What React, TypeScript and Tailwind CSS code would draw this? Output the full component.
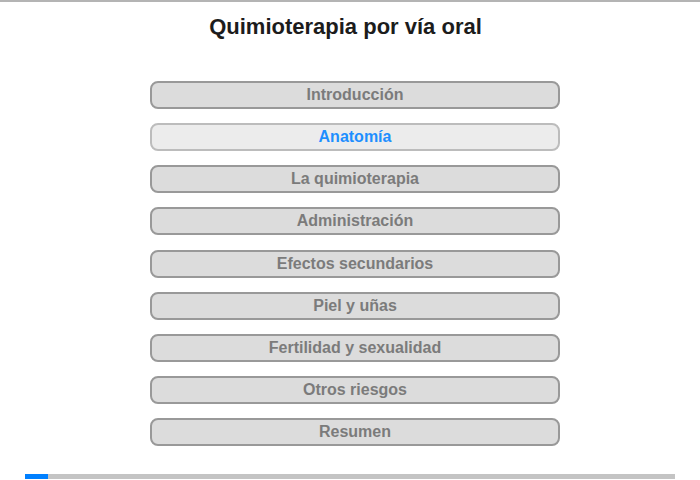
const chapters = [
  "Introducción",
  "Anatomía",
  "La quimioterapia",
  "Administración",
  "Efectos secundarios",
  "Piel y uñas",
  "Fertilidad y sexualidad",
  "Otros riesgos",
  "Resumen",
];

export default function App() {
  const active = 1;
  return (
    <div
      className="w-[700px] h-[480px] bg-white border-t-2 border-[#b4b4b4] flex flex-col overflow-hidden"
      style={{ fontFamily: '"Liberation Sans", Arial, sans-serif' }}
    >
      {/* Title */}
      <h1 className="mt-[12px] h-[26px] pl-[1px] pr-[10px] text-center text-[22px] leading-[26px] font-bold text-[#1c1c1c]">
        Quimioterapia por vía oral
      </h1>

      {/* Chapter menu */}
      <nav className="mt-[41px] flex flex-col gap-[14.15px] pl-[150px] pr-[140px]">
        {chapters.map((c, i) => (
          <button
            key={c}
            className={
              i === active
                ? "h-[28px] w-[410px] rounded-[8px] border-2 border-[#bcbcbc] bg-[#ececec] text-[16px] leading-[24px] font-bold text-[#1e8fff]"
                : "h-[28px] w-[410px] rounded-[8px] border-2 border-[#999999] bg-[#dcdcdc] text-[16px] leading-[24px] font-bold text-[#7b7b7b]"
            }
          >
            {c}
          </button>
        ))}
      </nav>

      {/* Progress */}
      <div className="mt-auto mb-[1px] mx-[25px] h-[5px] bg-[#c4c4c4] flex">
        <div className="w-[23px] h-full bg-[#0080ff]" />
      </div>
    </div>
  );
}
